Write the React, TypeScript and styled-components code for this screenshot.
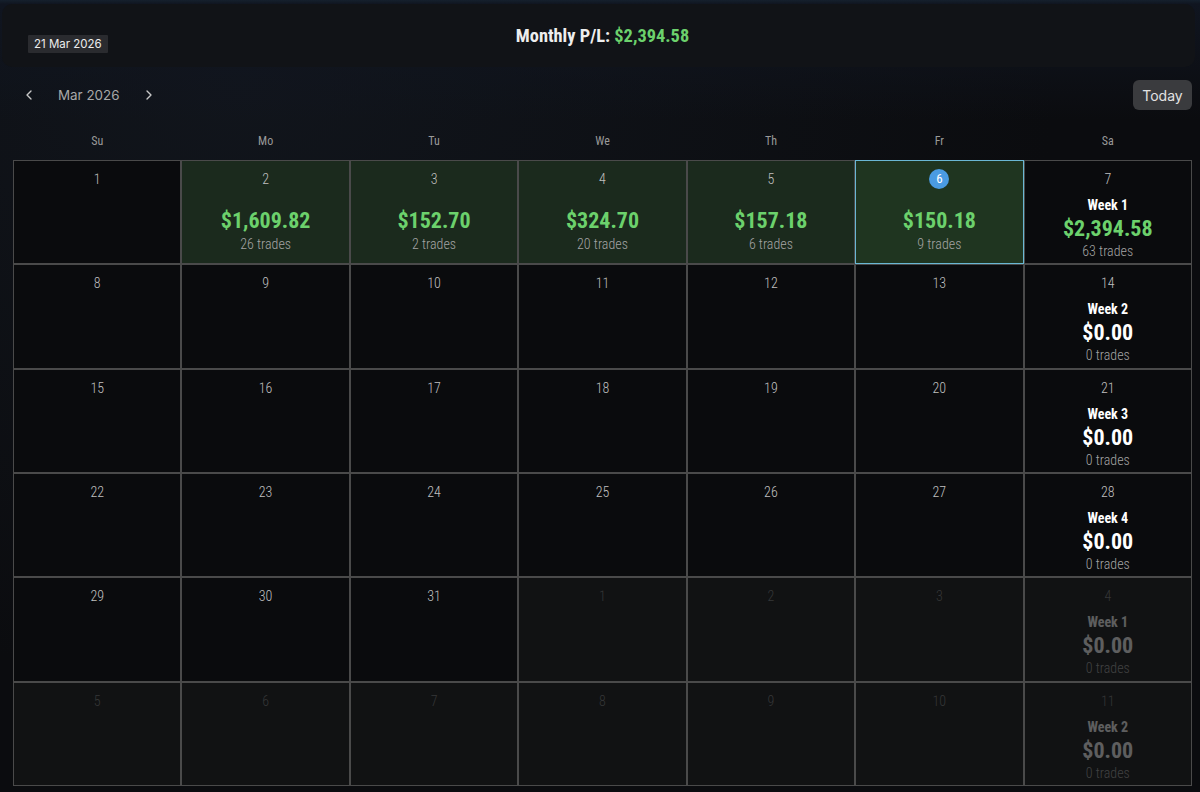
import React from 'react'
import styled, { createGlobalStyle, css } from 'styled-components'
import { ChevronLeft, ChevronRight } from 'lucide-react'

const GlobalStyle = createGlobalStyle`
	html, body {
		margin: 0;
		padding: 0;
		background: #0b0c0f;
	}
	#root {
		height: 100vh;
	}
`

const COND = `"Roboto Condensed", "Liberation Sans Narrow", "DejaVu Sans Condensed", Roboto, sans-serif`
const UI = `Inter, "Noto Sans", sans-serif`

interface Day {
	day: number
	faded?: boolean
	today?: boolean
	pl?: string
	trades?: number
	week?: { label: string; pl: string; trades: number; positive?: boolean }
}

const data: { [k: number]: { pl: string; trades: number } } = {
	2: { pl: '$1,609.82', trades: 26 },
	3: { pl: '$152.70', trades: 2 },
	4: { pl: '$324.70', trades: 20 },
	5: { pl: '$157.18', trades: 6 },
	6: { pl: '$150.18', trades: 9 },
}

const buildDays = (): Day[] => {
	const days: Day[] = []
	for (let i = 0; i < 42; i++) {
		const n = i + 1
		let day: Day
		if (n <= 31) {
			day = { day: n, ...(data[n] || {}) }
			if (n === 6) day.today = true
		} else {
			day = { day: n - 31, faded: true }
		}
		if (i % 7 === 6) {
			const w = Math.floor(i / 7)
			const first = w === 0
			day.week = {
				label: `Week ${w < 4 ? w + 1 : w - 3}`,
				pl: first ? '$2,394.58' : '$0.00',
				trades: first ? 63 : 0,
				positive: first,
			}
		}
		days.push(day)
	}
	return days
}

const weekdays = ['Su', 'Mo', 'Tu', 'We', 'Th', 'Fr', 'Sa']

export default function App() {
	const days = buildDays()

	return (
		<Page>
			<GlobalStyle />
			<Header>
				<DateBadge>21 Mar 2026</DateBadge>
				<Title>
					Monthly P/L: <Green>$2,394.58</Green>
				</Title>
				<span />
			</Header>

			<NavRow>
				<NavLeft>
					<NavButton aria-label="previous"><ChevronLeft size={16} strokeWidth={2} /></NavButton>
					<MonthLabel>Mar 2026</MonthLabel>
					<NavButton aria-label="next"><ChevronRight size={16} strokeWidth={2} /></NavButton>
				</NavLeft>
				<TodayButton>Today</TodayButton>
			</NavRow>

			<WeekdayRow>
				{weekdays.map(w => <Weekday key={w}>{w}</Weekday>)}
			</WeekdayRow>

			<Grid>
				{days.map((d, i) => (
					<Cell key={i} faded={d.faded} hasPL={!!d.pl} today={d.today}>
						{d.today
							? <TodayBadge>{d.day}</TodayBadge>
							: <DayNum faded={d.faded}>{d.day}</DayNum>}
						{d.pl && (
							<>
								<Amount>{d.pl}</Amount>
								<Trades>{d.trades} trades</Trades>
							</>
						)}
						{d.week && (
							<WeekBlock faded={d.faded}>
								<WeekLabel>{d.week.label}</WeekLabel>
								<WeekAmount positive={d.week.positive}>{d.week.pl}</WeekAmount>
								<Trades>{d.week.trades} trades</Trades>
							</WeekBlock>
						)}
					</Cell>
				))}
			</Grid>
		</Page>
	)
}

const Page = styled.div`
	height: 100%;
	box-sizing: border-box;
	display: flex;
	flex-direction: column;
	padding: 4px 8px 6px 13px;
	background:
		linear-gradient(180deg, #15202d 0px, #101520 4px, transparent 120px),
		radial-gradient(ellipse at 20% 10%, #11151c 0%, #0b0c0f 60%);
	background-color: #0b0c0f;
	overflow: hidden;
`

const Header = styled.div`
	margin: 0 -3px 0 -11px;
	height: 63px;
	display: grid;
	grid-template-columns: 1fr auto 1fr;
	padding: 0 26px;
	background: #111317;
	border-radius: 10px;
`

const DateBadge = styled.div`
	justify-self: start;
	align-self: start;
	margin-top: 31px;
	padding: 1px 6px;
	background: #2a2b2f;
	color: #ececec;
	font-family: ${UI};
	font-size: 11.5px;
	line-height: 16px;
	border-radius: 1px;
`

const Title = styled.div`
	margin: 21px 0 0 8px;
	align-self: start;
	font-family: ${COND};
	font-stretch: condensed;
	font-weight: 700;
	font-size: 18.4px;
	line-height: 22px;
	color: #eeeeee;
`

const Green = styled.span`
	color: #6cd16c;
`

const NavRow = styled.div`
	margin-top: 13px;
	display: flex;
	align-items: center;
	justify-content: space-between;
	height: 30px;
`

const NavLeft = styled.div`
	display: flex;
	align-items: center;
	gap: 8px;
	padding-left: 8px;
`

const NavButton = styled.button`
	display: flex;
	align-items: center;
	justify-content: center;
	width: 16px;
	height: 24px;
	padding: 0;
	background: none;
	border: none;
	color: #c8c8c8;
	cursor: pointer;
`

const MonthLabel = styled.div`
	width: 88px;
	text-align: left;
	padding-left: 13px;
	box-sizing: border-box;
	font-family: ${UI};
	font-size: 13.4px;
	color: #a8a8a8;
`

const TodayButton = styled.button`
	height: 30px;
	width: 59px;
	margin-right: 0;
	background: #3a3b3e;
	color: #e2e2e2;
	border: none;
	border-radius: 6px;
	font-family: ${UI};
	font-size: 14px;
	cursor: pointer;
`

const WeekdayRow = styled.div`
	display: grid;
	grid-template-columns: repeat(7, 1fr);
	margin: 23px 0 11px;
`

const Weekday = styled.div`
	text-align: center;
	font-family: ${COND};
	font-stretch: condensed;
	font-size: 12px;
	line-height: 16px;
	color: #9a9a9a;
`

const Grid = styled.div`
	display: grid;
	grid-template-columns: repeat(7, 1fr);
	grid-template-rows: repeat(6, 1fr);
	height: 626px;
`

const Cell = styled.div<{ faded?: boolean; hasPL?: boolean; today?: boolean }>`
	display: flex;
	flex-direction: column;
	align-items: center;
	padding-top: 9px;
	border: 1px solid #4a4a4a;
	background: #0a0b0d;
	font-family: ${COND};
	font-stretch: condensed;
	${({ faded }) => faded && css`
		background: #111213;
	`}
	${({ hasPL }) => hasPL && css`
		background: #1b2a1d;
	`}
	${({ today }) => today && css`
		background: #1f3520;
		border-color: #6ab7d4;
	`}
`

const DayNum = styled.div<{ faded?: boolean }>`
	font-size: 14px;
	line-height: 18px;
	font-weight: 300;
	color: ${({ faded }) => faded ? '#363738' : '#c0c0c0'};
`

const TodayBadge = styled.div`
	width: 20px;
	height: 20px;
	margin: -1px 0 -1px;
	border-radius: 50%;
	background: #4a9be2;
	color: #ffffff;
	font-size: 13px;
	line-height: 20px;
	text-align: center;
`

const Amount = styled.div`
	margin-top: 20px;
	font-size: 22px;
	line-height: 26px;
	font-weight: 700;
	color: #6cd16c;
`

const Trades = styled.div`
	margin-top: 1px;
	font-size: 14px;
	line-height: 18px;
	font-weight: 300;
	color: #a4a4a4;
`

const WeekBlock = styled.div<{ faded?: boolean }>`
	margin-top: 8px;
	display: flex;
	flex-direction: column;
	align-items: center;
	${({ faded }) => faded && css`
		opacity: 0.32;
	`}
`

const WeekLabel = styled.div`
	font-size: 14px;
	line-height: 18px;
	font-weight: 700;
	color: #ffffff;
`

const WeekAmount = styled.div<{ positive?: boolean }>`
	margin-top: 2px;
	margin-bottom: -1px;
	font-size: 22px;
	line-height: 26px;
	font-weight: 700;
	color: ${({ positive }) => positive ? '#6cd16c' : '#ffffff'};
`
